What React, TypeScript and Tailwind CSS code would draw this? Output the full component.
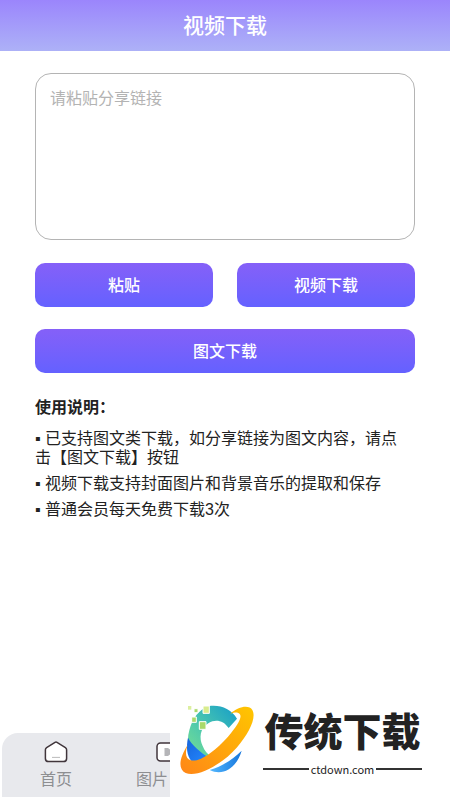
import type { ReactNode } from 'react';

const tips = [
  '已支持图文类下载，如分享链接为图文内容，请点击【图文下载】按钮',
  '视频下载支持封面图片和背景音乐的提取和保存',
  '普通会员每天免费下载3次',
];

function ActionButton({ children }: { children: ReactNode }) {
  return (
    <button
      type="button"
      className="h-11 w-full rounded-[10px] bg-linear-to-b from-[#8560f8] to-[#6461ff] pb-[2px] text-base font-medium text-white"
    >
      {children}
    </button>
  );
}

function HomeIcon() {
  return (
    <svg className="h-6 w-6" viewBox="0 0 24 24" fill="#fff" stroke="#40353b" strokeLinejoin="round">
      <path strokeWidth="1.5" d="M11 2.4Q12 1.8 13 2.4L21.4 7.6Q22.6 8.4 22.6 9.8V18.4Q22.6 21.6 19.4 21.6H4.6Q1.4 21.6 1.4 18.4V9.8Q1.4 8.4 2.6 7.6Z" />
      <path strokeWidth="0.8" stroke="#aaa" d="M8 17.4H16" />
    </svg>
  );
}

function VideoIcon() {
  return (
    <svg className="h-6 w-6" viewBox="0 0 24 24" fill="#fff">
      <rect x="1" y="3" width="22" height="18" rx="3.5" stroke="#40353b" strokeWidth="1.5" />
      <path fill="#b5b5b8" d="M8.5 8H12L17 12L12 16H8.5Z" />
    </svg>
  );
}

function BrandLogo() {
  return (
    <svg className="h-[110px] w-[90px] shrink-0" viewBox="30 0 270 330" aria-hidden="true">
      <defs>
        <linearGradient id="ring" x1="0" y1="1" x2="1" y2="0">
          <stop offset="0" stopColor="#ff8617" />
          <stop offset="1" stopColor="#ffc600" />
        </linearGradient>
        <linearGradient id="arc" x1="0" y1="1" x2="1" y2="0">
          <stop offset="0" stopColor="#7be18f" />
          <stop offset="0.45" stopColor="#4cc8ae" />
          <stop offset="1" stopColor="#159dc9" />
        </linearGradient>
        <linearGradient id="wave" x1="0" y1="0" x2="1" y2="1">
          <stop offset="0" stopColor="#1764db" />
          <stop offset="1" stopColor="#2389ff" />
        </linearGradient>
        <linearGradient id="base" x1="0" y1="0" x2="1" y2="0">
          <stop offset="0" stopColor="#55b9ff" />
          <stop offset="1" stopColor="#1676dc" />
        </linearGradient>
      </defs>
      <path fill="url(#arc)" d="M145 49C179 43 212 56 231 86L206 114C191 91 166 86 146 99C119 115 117 145 128 168C134 183 143 192 152 199L117 215C88 199 77 160 88 121C97 86 117 59 145 49Z" />
      <path fill="url(#wave)" d="M84 143C94 164 125 190 146 202L117 216L94 213C80 195 78 172 84 143Z" />
      <path fill="url(#base)" d="M149 240C185 230 218 208 245 182C231 232 190 260 149 240Z" />
      <path fill="url(#ring)" d="M211 71C236 48 268 44 277 60C290 83 268 130 230 173C183 226 111 263 77 249C52 237 59 202 83 165C74 190 77 206 92 211C121 218 168 180 204 140C232 108 248 81 239 72C234 66 225 66 211 71Z" />
      <g fill="#a9d96b" stroke="#fff" strokeWidth="3">
        <path fill="#dcef9f" stroke="none" d="M84 48H94V59H84Z" />
        <path d="M102 56H114V68H102Z" />
        <path fill="#d9ec8d" d="M129 48H148V70H129Z" />
        <path d="M95 81H109V97H95Z" />
        <path d="M118 95H138V118H118Z" />
      </g>
    </svg>
  );
}

function Brand() {
  return (
    <div className="flex h-[110px] w-[280px] shrink-0 bg-white text-[#222]">
      <BrandLogo />
      <div className="flex flex-1 flex-col pt-[14px] pr-7 pl-[3px]">
        <strong className="text-center text-[39px] leading-[50px] font-black whitespace-nowrap">传统下载</strong>
        <div className="mt-[7px] flex items-center gap-[2px]">
          <span className="h-[2px] flex-1 bg-[#333]" />
          <span className="text-[11px] leading-4">ctdown.com</span>
          <span className="h-[2px] flex-1 bg-[#333]" />
        </div>
      </div>
    </div>
  );
}

export default function App() {
  return (
    <div className="flex min-h-screen flex-col bg-white font-['Noto_Sans_CJK_SC',sans-serif] text-[#222]">
      {/* Header */}
      <header className="bg-linear-to-b from-[#9b85fc] to-[#adb1f7] pb-[2px]">
        <h1 className="text-center text-[21px] leading-[49px] font-medium text-white">视频下载</h1>
      </header>

      <main className="px-[35px] pt-[22px]">
        <textarea
          aria-label="分享链接"
          placeholder="请粘贴分享链接"
          className="block h-[167px] w-full resize-none rounded-2xl border border-[#b4b4b4] px-[14px] py-[11px] text-base leading-6 placeholder:text-[#b3b3b3]"
        />

        {/* Actions */}
        <div className="mt-[23px] grid grid-cols-2 gap-x-6 gap-y-[22px]">
          <ActionButton>粘贴</ActionButton>
          <ActionButton>视频下载</ActionButton>
          <div className="col-span-2">
            <ActionButton>图文下载</ActionButton>
          </div>
        </div>

        {/* Instructions */}
        <section className="mt-[21px]">
          <h2 className="text-base leading-6 font-bold">使用说明：</h2>
          <ul className="mt-[11px] space-y-[7px] pr-3 font-['Liberation_Sans','Noto_Sans_CJK_SC',sans-serif] text-base leading-[19px]">
            {tips.map((tip) => (
              <li key={tip}>{`▪ ${tip}`}</li>
            ))}
          </ul>
        </section>
      </main>

      {/* Bottom bar */}
      <footer className="mt-auto flex items-end">
        <nav className="mb-[3px] ml-[2px] flex h-16 min-w-0 flex-1 overflow-hidden rounded-tl-2xl bg-[#e8e9ed] text-base leading-6 text-[#8d8e91]">
          <a href="#home" className="flex w-[108px] shrink-0 flex-col items-center pt-[7px]">
            <HomeIcon />
            <span className="mt-[2px]">首页</span>
          </a>
          <a href="#images" className="flex shrink-0 flex-col pt-[7px] pl-[26px]">
            <span className="pl-5">
              <VideoIcon />
            </span>
            <span className="mt-[2px]">图片</span>
          </a>
        </nav>
        <Brand />
      </footer>
    </div>
  );
}
